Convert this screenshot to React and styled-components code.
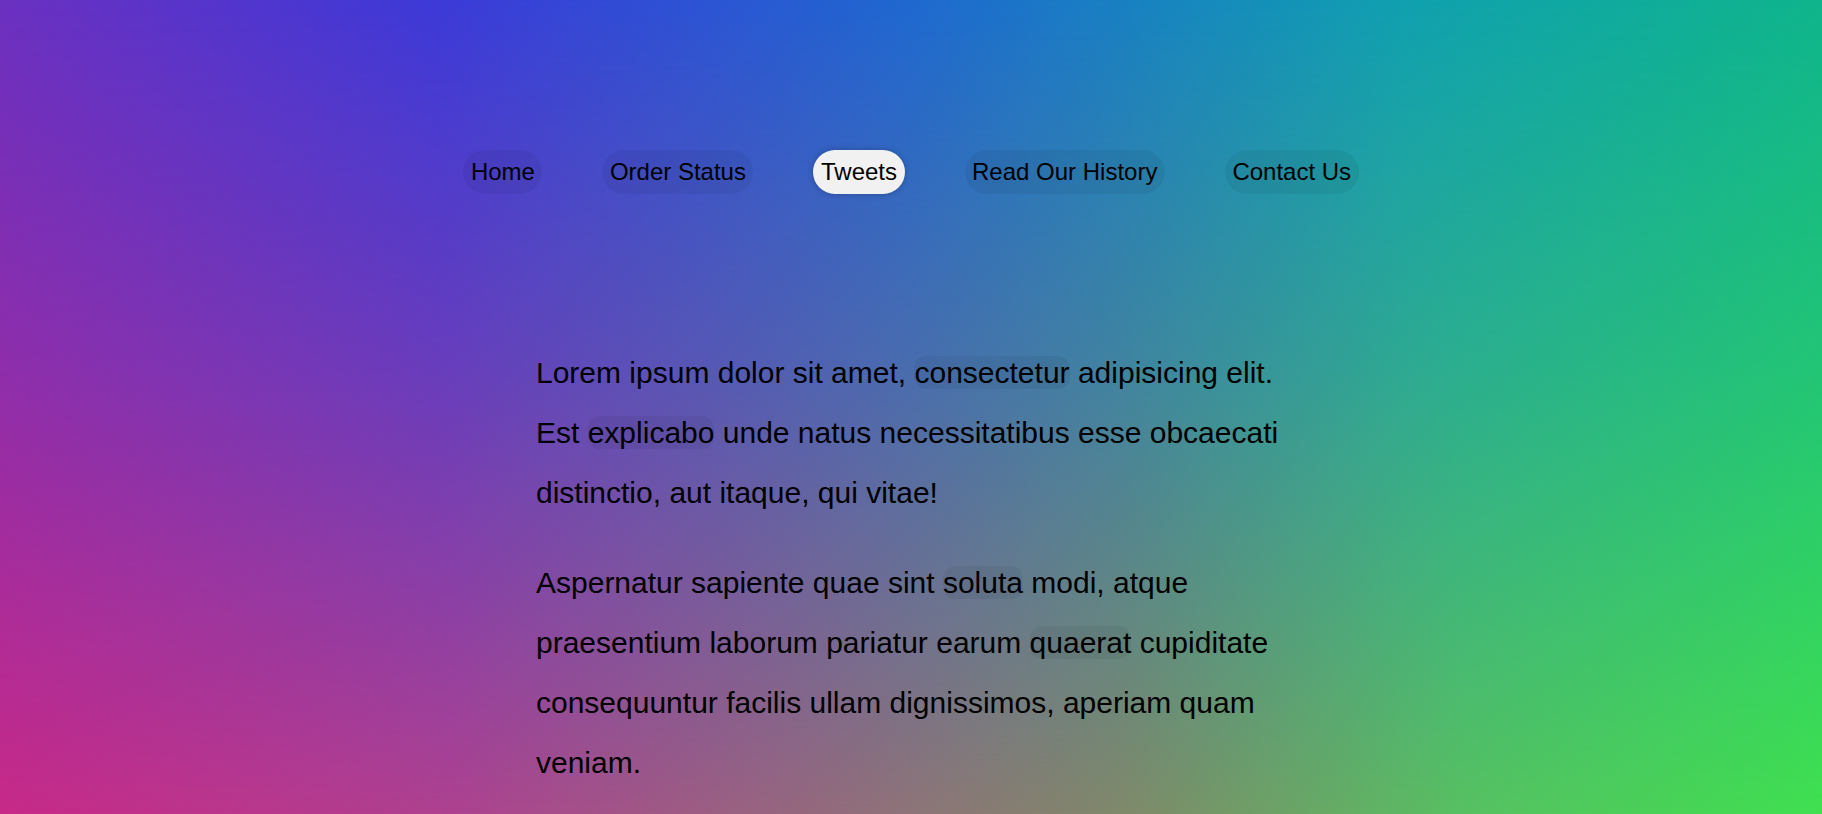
import React from "react";
import styled, { createGlobalStyle } from "styled-components";

const GlobalStyle = createGlobalStyle`
  html, body {
    margin: 0;
    padding: 0;
    height: 100%;
    overflow: hidden;
  }
  body {
    font-family: "Liberation Sans", Arial, sans-serif;
    color: #000;
  }
`;

const Page = styled.div`
  position: relative;
  height: 100vh;
  overflow: hidden;
  display: flex;
  flex-direction: column;
  align-items: center;
  padding-top: 150px;
  box-sizing: border-box;
  background: linear-gradient(
    to right,
    #c82a88 0%,
    #ae4290 25%,
    #8e7478 50%,
    #7f8a6a 62%,
    #58c062 80%,
    #40e050 100%
  );

  &::before {
    content: "";
    position: absolute;
    inset: 0;
    background: linear-gradient(
      to right,
      #6a30c0 0%,
      #3c3ad8 24%,
      #1e68d0 50%,
      #10a0b0 77%,
      #0fb48c 100%
    );
    -webkit-mask-image: linear-gradient(
      to bottom,
      #000 0%,
      rgba(0, 0, 0, 0.62) 45%,
      rgba(0, 0, 0, 0) 100%
    );
    mask-image: linear-gradient(
      to bottom,
      #000 0%,
      rgba(0, 0, 0, 0.62) 45%,
      rgba(0, 0, 0, 0) 100%
    );
  }
`;

const Nav = styled.nav`
  position: relative;
  z-index: 1;
  display: flex;
  gap: 60px;
`;

const NavItem = styled.a`
  font-size: 24px;
  line-height: normal;
  padding: 8px 7.5px;
  border-radius: 22px;
  color: #000;
  text-decoration: none;
  white-space: nowrap;
  background: ${(p) => (p.$active ? "#f1f1f1" : "rgba(0, 0, 0, 0.055)")};
  box-shadow: ${(p) => (p.$active ? "0 0 6px rgba(0, 0, 0, 0.25)" : "none")};
`;

const Article = styled.article`
  position: relative;
  z-index: 1;
  width: 100%;
  max-width: 750px;
  margin-top: 149px;
  display: flex;
  flex-direction: column;
  gap: 30px;
`;

const Para = styled.p`
  margin: 0;
  font-size: 30px;
  line-height: 2;
`;

const Mark = styled.span`
  background: rgba(0, 0, 0, 0.05);
  border-radius: 12px;
`;

const links = [
  { label: "Home" },
  { label: "Order Status" },
  { label: "Tweets", active: true },
  { label: "Read Our History" },
  { label: "Contact Us" },
];

export default function App() {
  return (
    <>
      <GlobalStyle />
      <Page>
        <Nav>
          {links.map((l) => (
            <NavItem key={l.label} href="#" $active={l.active}>
              {l.label}
            </NavItem>
          ))}
        </Nav>
        <Article>
          <Para>
            Lorem ipsum dolor sit amet, <Mark>consectetur</Mark> adipisicing
            elit. Est <Mark>explicabo</Mark> unde natus necessitatibus esse
            obcaecati distinctio, aut itaque, qui vitae!
          </Para>
          <Para>
            Aspernatur sapiente quae sint <Mark>soluta</Mark> modi, atque
            praesentium laborum pariatur earum <Mark>quaerat</Mark> cupiditate
            consequuntur facilis ullam dignissimos, aperiam quam veniam.
          </Para>
        </Article>
      </Page>
    </>
  );
}
